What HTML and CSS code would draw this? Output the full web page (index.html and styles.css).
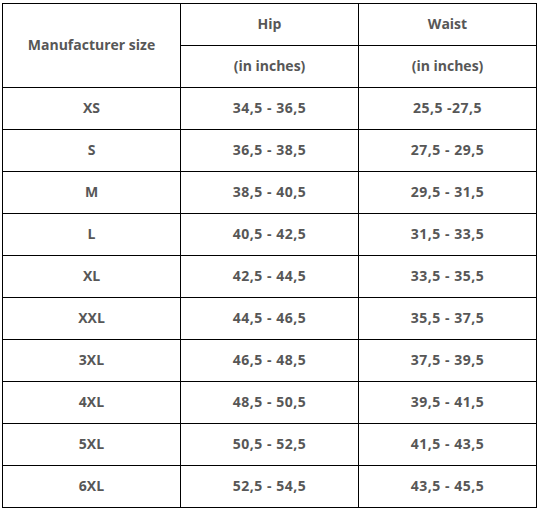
FILE: index.html
```html
<!DOCTYPE html>
<html>
<head>
<meta charset="utf-8">
<link rel="stylesheet" href="styles.css">
</head>
<body>
<table class="size-table">
  <colgroup><col class="c"><col class="c"><col class="c"></colgroup>
  <tr><th rowspan="2">Manufacturer size</th><th>Hip</th><th>Waist</th></tr>
  <tr><th>(in inches)</th><th>(in inches)</th></tr>
  <tr><td>XS</td><td class="num">34,5 - 36,5</td><td class="num">25,5 -27,5</td></tr>
  <tr><td>S</td><td class="num">36,5 - 38,5</td><td class="num">27,5 - 29,5</td></tr>
  <tr><td>M</td><td class="num">38,5 - 40,5</td><td class="num">29,5 - 31,5</td></tr>
  <tr><td>L</td><td class="num">40,5 - 42,5</td><td class="num">31,5 - 33,5</td></tr>
  <tr><td>XL</td><td class="num">42,5 - 44,5</td><td class="num">33,5 - 35,5</td></tr>
  <tr><td>XXL</td><td class="num">44,5 - 46,5</td><td class="num">35,5 - 37,5</td></tr>
  <tr><td>3XL</td><td class="num">46,5 - 48,5</td><td class="num">37,5 - 39,5</td></tr>
  <tr><td>4XL</td><td class="num">48,5 - 50,5</td><td class="num">39,5 - 41,5</td></tr>
  <tr><td>5XL</td><td class="num">50,5 - 52,5</td><td class="num">41,5 - 43,5</td></tr>
  <tr><td>6XL</td><td class="num">52,5 - 54,5</td><td class="num">43,5 - 45,5</td></tr>
</table>
</body>
</html>
```
FILE: styles.css
```css
html, body {
  margin: 0;
  padding: 0;
  background: #ffffff;
}
body {
  padding: 3px 0 0 2px;
  font-family: "Open Sans", "Noto Sans", "DejaVu Sans", sans-serif;
}
.size-table {
  border-collapse: collapse;
  table-layout: fixed;
  width: 535px;
}
.size-table .c {
  width: 178px;
}
.size-table th,
.size-table td {
  border: 1px solid #000;
  height: 42px;
  padding: 0 0 3px 0;
  text-align: center;
  vertical-align: middle;
  font-size: 14px;
  font-weight: 700;
  color: #575757;
  box-sizing: border-box;
}
.size-table td.num {
  letter-spacing: 0.5px;
}
```
